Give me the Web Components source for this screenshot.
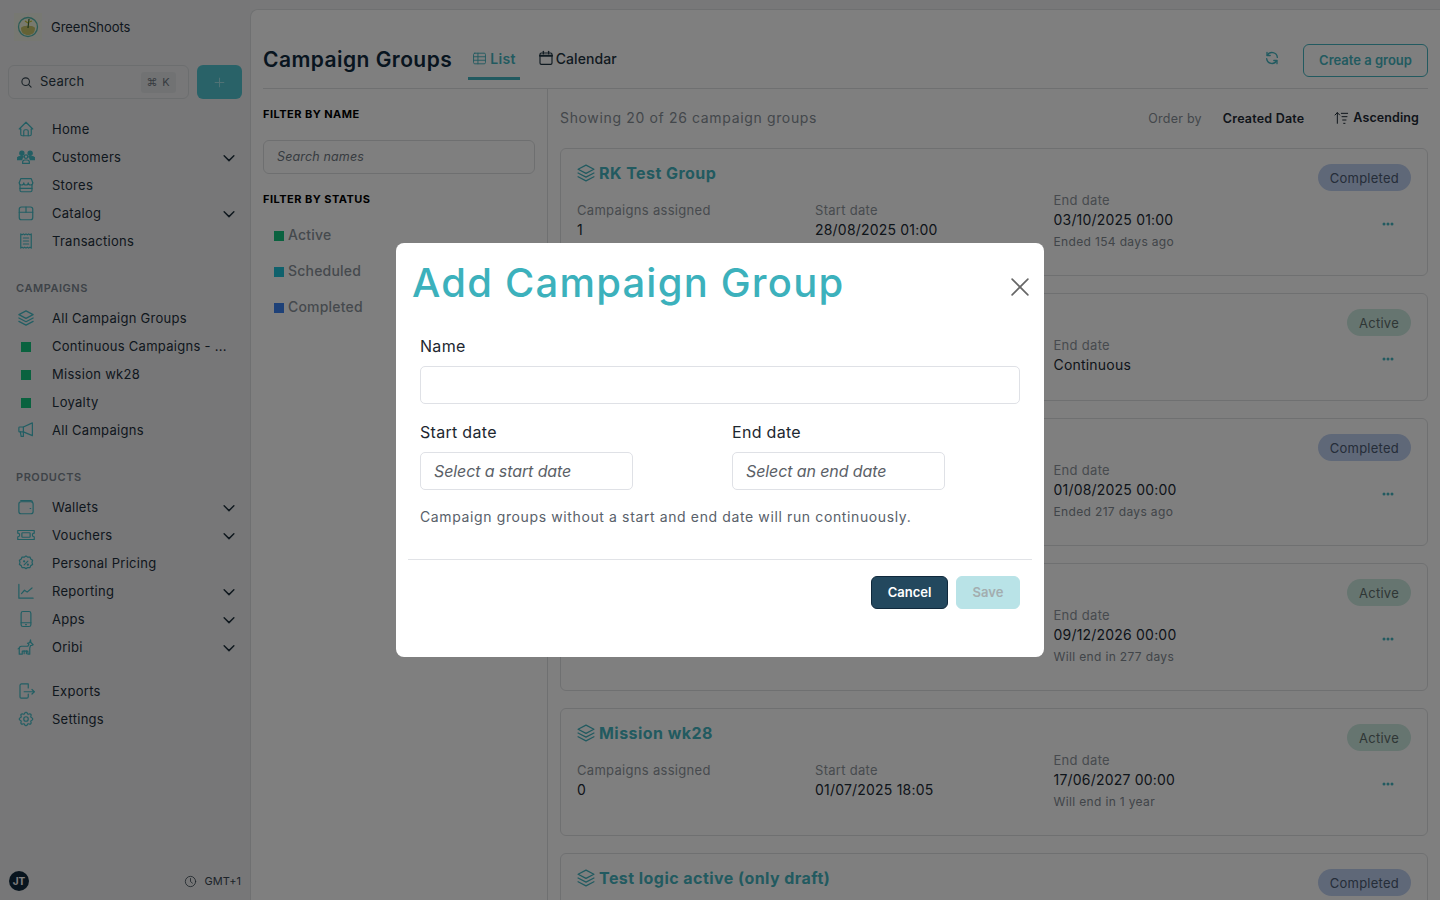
<!DOCTYPE html>
<html lang="en">
<head>
<meta charset="utf-8">
<title>Campaign Groups</title>
<style>
    html, body { margin: 0; height: 100%; overflow: hidden; }
    body { font-family: Inter, "Liberation Sans", sans-serif; color: #1d2b36; background: #f0f1f2; }
</style>
</head>
<body>
<gs-app></gs-app>

<script>
//stroke icons, all on a 24x24 viewbox
const ICONS = {
    home: '<path d="M5 12H3l9-9 9 9h-2"/><path d="M5 12v7a2 2 0 0 0 2 2h10a2 2 0 0 0 2-2v-7"/><path d="M9 21v-6a2 2 0 0 1 2-2h2a2 2 0 0 1 2 2v6"/>',
    users: '<circle cx="6.500" cy="7" r="2.800" fill="currentColor"/><circle cx="17.500" cy="7" r="2.800" fill="currentColor"/><path fill="currentColor" d="M0 15.500c0-3 2.500-4.500 5.500-4.500 1.200 0 2.300.3 3 .8-1.300 1-2 2.200-2.200 3.700z"/><path fill="currentColor" d="M24 15.500c0-3-2.500-4.500-5.500-4.500-1.200 0-2.300.3-3 .8 1.300 1 2 2.200 2.200 3.700z"/><circle cx="12" cy="11.500" r="2.300"/><path d="M7.500 20.500v-1.500c0-1.500 1.500-3 3-3h3c1.500 0 3 1.500 3 3v1.500z"/>',
    store: '<path d="M3 9l2-5.500h14L21 9"/><path d="M3 9a3 3 0 0 0 6 0 3 3 0 0 0 6 0 3 3 0 0 0 6 0"/><path d="M4 12v7a2 2 0 0 0 2 2h12a2 2 0 0 0 2-2v-7"/><path d="M4 16.500h16"/>',
    catalog: '<rect x="3" y="4" width="18" height="17" rx="3"/><path d="M3 11h18"/><path d="M12 4v7"/>',
    receipt: '<path d="M5 2.500l1.750 1.200L8.500 2.500l1.750 1.200L12 2.500l1.750 1.200 1.750-1.200 1.750 1.200L19 2.500v19l-1.750-1.200-1.750 1.200-1.750-1.200L12 21.500l-1.750-1.200-1.750 1.200-1.750-1.200L5 21.500z"/><path d="M8.500 8h7"/><path d="M8.500 12h7"/><path d="M8.500 16h7"/>',
    layers: '<path d="M12 2.500 2.500 7.500l9.500 5 9.500-5z"/><path d="M2.500 12l9.500 5 9.500-5"/><path d="M2.500 16.500l9.500 5 9.500-5"/>',
    megaphone: '<path d="M8.500 15v5.500H5.500L4.500 14.500"/><path d="M8.500 8l12-5.500v17L8.500 14.500H3.500a1 1 0 0 1-1-1V9a1 1 0 0 1 1-1z"/><path d="M8.500 8v6.500"/>',
    wallet: '<path d="M5 3.500h13.500a2 2 0 0 1 2 2"/><rect x="2.500" y="5" width="19" height="16" rx="3"/><path d="M17.500 14h.8"/>',
    ticket: '<path d="M1 6h22v3.500a2.500 2.500 0 0 0 0 5V18H1v-3.500a2.500 2.500 0 0 0 0-5z"/><rect x="6.500" y="9" width="11" height="6" rx="1"/>',
    discount: '<path d="M12 2.500l2.400 1.700 2.900-.2 1 2.700 2.500 1.600-.8 2.800.8 2.800-2.500 1.600-1 2.700-2.900-.2-2.400 1.500-2.400-1.500-2.900.2-1-2.700-2.500-1.600.8-2.800-.8-2.800 2.500-1.600 1-2.700 2.900.2z"/><path d="M9.500 14.500l5-5"/><circle cx="9.500" cy="9.800" r=".7"/><circle cx="14.500" cy="14.200" r=".7"/>',
    chart: '<path d="M2.500 3v18.500h19"/><path d="M6 15.500l4-4.500 3.500 2.500 6.500-5.500"/>',
    mobile: '<rect x="5.500" y="2" width="13" height="20" rx="2.500"/><path d="M5.500 17h13"/><path d="M11.500 19.500h1"/>',
    goat: '<path d="M3 21.500V14c0-2 1-3 3-3h8.500l1.500-3-2-1 3-1 1-3.500.5 3.500 3 3-2 1h-1.500l-1 3.500v8h-2.500v-4H7v4H3"/><path d="M3 13.500l-1.500 1"/><path d="M9.500 17v4"/><path d="M12.500 17v4"/>',
    exportfile: '<path d="M15 8V2.500H6a2 2 0 0 0-2 2v15.500a1.500 1.500 0 0 0 1.500 1.500H13a2 2 0 0 0 2-2v-3.500"/><path d="M9.500 13H23"/><path d="M20 10l3 3-3 3"/>',
    settings: '<path d="M10.325 4.317c.426-1.756 2.924-1.756 3.350 0a1.724 1.724 0 0 0 2.573 1.066c1.543-.94 3.310.826 2.370 2.370a1.724 1.724 0 0 0 1.065 2.572c1.756.426 1.756 2.924 0 3.350a1.724 1.724 0 0 0-1.066 2.573c.94 1.543-.826 3.310-2.370 2.370a1.724 1.724 0 0 0-2.572 1.065c-.426 1.756-2.924 1.756-3.350 0a1.724 1.724 0 0 0-2.573-1.066c-1.543.94-3.310-.826-2.370-2.370a1.724 1.724 0 0 0-1.065-2.572c-1.756-.426-1.756-2.924 0-3.350a1.724 1.724 0 0 0 1.066-2.573c-.94-1.543.826-3.310 2.370-2.370 1 .608 2.296.07 2.572-1.065z"/><circle cx="12" cy="12" r="3"/>',
    chevron: '<path d="M5.500 9l6.500 6.500L18.500 9"/>',
    search: '<circle cx="10.500" cy="10.500" r="7"/><path d="M20.500 20.500l-5-5"/>',
    plus: '<path d="M12 4v16"/><path d="M4 12h16"/>',
    refresh: '<path d="M20 11A8 8 0 0 0 5 8"/><path d="M4.500 3.500v4.800h4.800"/><path d="M4 13a8 8 0 0 0 15 3"/><path d="M19.500 20.500v-4.800h-4.800"/>',
    table: '<rect x="2.500" y="3.500" width="19" height="17" rx="2"/><path d="M2.500 9.200h19"/><path d="M2.500 14.800h19"/><path d="M9.500 3.500v17"/>',
    calendar: '<rect x="3" y="4.500" width="18" height="17" rx="2"/><path d="M3 8.500h18" stroke-width="3"/><path d="M8 2v4"/><path d="M16 2v4"/>',
    sort: '<path d="M6.500 20V4"/><path d="M3 7.500 6.500 4 10 7.500"/><path d="M12.500 5H22"/><path d="M13.500 10H21"/><path d="M14.500 15h5"/><path d="M16 20h2"/>',
    clock: '<circle cx="12" cy="12" r="9.500"/><path d="M12 6.500V12l3.500 3"/>',
    close: '<path d="M1.500 1.500l21 21"/><path d="M22.500 1.500l-21 21"/>',
};

function makeTemplate(html) {
    const t = document.createElement("template");
    t.innerHTML = html;
    return t;
}

//base class, stamps the template into an open shadow root
class ShadowElement extends HTMLElement {
    connectedCallback() {
        if (this.shadowRoot) return;
        this.attachShadow({ mode: "open" }).append(this.constructor.template.content.cloneNode(true));
        if (this.ready) this.ready();
    }
}

class GsIcon extends HTMLElement {
    connectedCallback() {
        if (this.shadowRoot) return;
        const size = this.getAttribute("size") || 18;
        const sw = this.getAttribute("stroke") || 1.5;
        this.attachShadow({ mode: "open" }).innerHTML = `
            <style>:host{display:inline-flex;flex:none;width:${size}px;height:${size}px;}svg{display:block;}</style>
            <svg width="${size}" height="${size}" viewBox="0 0 24 24" fill="none" stroke="currentColor"
                 stroke-width="${sw}" stroke-linecap="round" stroke-linejoin="round">${ICONS[this.getAttribute("name")] || ""}</svg>`;
    }
}

//single row of the side navigation
class GsNavItem extends ShadowElement {
    static template = makeTemplate(`
        <style>
            :host { display: flex; align-items: center; height: 28px; padding-left: 17px; padding-right: 12px; font-size: 13px; letter-spacing: .28px; color: #1e2f3c; }
            .lead { width: 18px; height: 18px; display: flex; align-items: center; justify-content: center; color: #45bcc7; margin-right: 17px; flex: none; }
            .swatch { width: 10px; height: 10px; margin-top: 2px; background: #14c47f; }
            .text { flex: 1; white-space: nowrap; overflow: hidden; }
            .end { display: flex; padding-top: 2px; color: #1e2f3c; }
        </style>
        <span class="lead"></span><span class="text"><slot></slot></span><span class="end"></span>
    `);
    ready() {
        const lead = this.shadowRoot.querySelector(".lead");
        if (this.hasAttribute("swatch")) lead.innerHTML = '<span class="swatch"></span>';
        else lead.innerHTML = `<gs-icon name="${this.getAttribute("icon")}" size="18" stroke="1.600"></gs-icon>`;
        if (this.hasAttribute("more")) {
            this.shadowRoot.querySelector(".end").innerHTML = '<gs-icon name="chevron" size="18" stroke="1.900"></gs-icon>';
        }
    }
}

class GsNavHeading extends ShadowElement {
    static template = makeTemplate(`
        <style>
            :host { display: block; padding-left: 16px; font-size: 11px; font-weight: 600; letter-spacing: .55px; color: #7d8690; line-height: 14px; }
        </style>
        <slot></slot>
    `);
}

class GsSidebar extends ShadowElement {
    static template = makeTemplate(`
        <style>
            :host { display: flex; flex-direction: column; width: 250px; flex: none; height: 100vh; box-sizing: border-box; background: #eeeff0; }
            .brand { display: flex; align-items: center; height: 28px; margin-top: 13px; padding-left: 14px; font-size: 13px; letter-spacing: -.04px; color: #1e2f3c; gap: 9px; }
            .brand svg { display: block; }
            .find { display: flex; gap: 8px; margin: 24px 8px 0 8px; height: 34px; }
            .search { flex: 1; box-sizing: border-box; border: 1px solid #d9dcdf; border-radius: 6px; display: flex; align-items: center; padding: 0 12px 0 11px; font-size: 13px; line-height: 15px; letter-spacing: .2px; color: #2b3a46; }
            .search gs-icon { margin-right: 7px; color: #33424e; }
            .search span { flex: 1; padding-bottom: 1px; }
            .search kbd { font: inherit; font-size: 11px; letter-spacing: .9px; background: #e3e5e7; color: #6f7882; border-radius: 3px; width: 35px; height: 21px; line-height: 21px; text-align: center; }
            .add { width: 45px; border-radius: 6px; background: #52c5d1; color: #a4e4ea; display: flex; align-items: center; justify-content: center; }
            nav { display: block; }
            .n1 { margin-top: 16px; }
            gs-nav-heading { margin-top: 26px; margin-bottom: 9px; }
            .n3 { margin-top: 16px; }
            .foot { margin-top: auto; display: flex; align-items: center; justify-content: space-between; height: 20px; padding: 0 9px; margin-bottom: 9px; font-size: 11px; letter-spacing: .05px; color: #3a4752; }
            .avatar { width: 20px; height: 20px; border-radius: 50%; background: #10293c; color: #fff; font-size: 10px; font-weight: 700; display: flex; align-items: center; justify-content: center; }
            .tz { display: flex; align-items: center; gap: 8px; }
        </style>
        <div class="brand">
            <svg width="28" height="28" viewBox="0 0 28 28">
                <rect width="28" height="28" fill="#eff1e4"/>
                <circle cx="14" cy="14" r="9.500" fill="#f2f4dc" stroke="#58b8ae" stroke-width="1.300"/>
                <path d="M7 15c1-3 13-3 14 0 0 5-3 7-7 7s-7-2-7-7z" fill="#c9c56a"/>
                <path d="M14 15l1-9" stroke="#3f6a34" stroke-width="1.200"/>
                <path d="M14 10l-3-2M15 9l3-1" stroke="#c8c533" stroke-width="1.200"/>
            </svg>
            <span>GreenShoots</span>
        </div>
        <div class="find">
            <div class="search"><gs-icon name="search" size="13" stroke="2"></gs-icon><span>Search</span><kbd>⌘ K</kbd></div>
            <div class="add"><gs-icon name="plus" size="13" stroke="1.800"></gs-icon></div>
        </div>
        <nav class="n1">
            <gs-nav-item icon="home">Home</gs-nav-item>
            <gs-nav-item icon="users" more>Customers</gs-nav-item>
            <gs-nav-item icon="store">Stores</gs-nav-item>
            <gs-nav-item icon="catalog" more>Catalog</gs-nav-item>
            <gs-nav-item icon="receipt">Transactions</gs-nav-item>
        </nav>
        <gs-nav-heading>CAMPAIGNS</gs-nav-heading>
        <nav>
            <gs-nav-item icon="layers">All Campaign Groups</gs-nav-item>
            <gs-nav-item swatch>Continuous Campaigns - ...</gs-nav-item>
            <gs-nav-item swatch>Mission wk28</gs-nav-item>
            <gs-nav-item swatch>Loyalty</gs-nav-item>
            <gs-nav-item icon="megaphone">All Campaigns</gs-nav-item>
        </nav>
        <gs-nav-heading>PRODUCTS</gs-nav-heading>
        <nav>
            <gs-nav-item icon="wallet" more>Wallets</gs-nav-item>
            <gs-nav-item icon="ticket" more>Vouchers</gs-nav-item>
            <gs-nav-item icon="discount">Personal Pricing</gs-nav-item>
            <gs-nav-item icon="chart" more>Reporting</gs-nav-item>
            <gs-nav-item icon="mobile" more>Apps</gs-nav-item>
            <gs-nav-item icon="goat" more>Oribi</gs-nav-item>
        </nav>
        <nav class="n3">
            <gs-nav-item icon="exportfile">Exports</gs-nav-item>
            <gs-nav-item icon="settings">Settings</gs-nav-item>
        </nav>
        <div class="foot">
            <span class="avatar">JT</span>
            <span class="tz"><gs-icon name="clock" size="13"></gs-icon>GMT+1</span>
        </div>
    `);
}

class GsPageHeader extends ShadowElement {
    static template = makeTemplate(`
        <style>
            :host { display: flex; align-items: flex-start; height: 79px; box-sizing: border-box; margin: 0 12px 0 12px; border-bottom: 1px solid #dfe1e3; }
            h1 { margin: 34px 0 0; font-size: 21px; line-height: 32px; font-weight: 600; letter-spacing: .45px; color: #102a3e; }
            .tab { display: flex; align-items: center; gap: 2px; height: 34px; padding-bottom: 2px; margin-top: 31px; font-size: 14px; font-weight: 500; letter-spacing: .1px; color: #1f3442; }
            .list { margin-left: 16px; padding: 0 4px 2px; gap: 3px; color: #45b5c0; font-weight: 600; letter-spacing: .3px; border-bottom: 3px solid #45b5c0; }
            .cal { margin-left: 18px; }
            .spacer { flex: 1; }
            .sync { margin-top: 40px; margin-right: 23px; color: #45b5c0; }
            button { margin-top: 34px; width: 125px; height: 33px; padding: 0 0 2px; background: none; border: 1px solid #45b5c0; border-radius: 6px; color: #45b5c0; font: 600 13px Inter, sans-serif; }
        </style>
        <h1>Campaign Groups</h1>
        <div class="tab list"><gs-icon name="table" size="15"></gs-icon>List</div>
        <div class="tab cal"><gs-icon name="calendar" size="16" stroke="1.700"></gs-icon>Calendar</div>
        <div class="spacer"></div>
        <gs-icon class="sync" name="refresh" size="16" stroke="2"></gs-icon>
        <button>Create a group</button>
    `);
}

class GsStatusFilter extends ShadowElement {
    static template = makeTemplate(`
        <style>
            :host { display: flex; align-items: center; box-sizing: border-box; height: 36px; padding: 0 0 1px 11px; font-size: 14px; font-weight: 500; letter-spacing: .2px; color: #8b939b; }
            i { width: 10px; height: 10px; margin: 3px 4px 0 0; background: var(--swatch); }
        </style>
        <i></i><slot></slot>
    `);
}

class GsFilters extends ShadowElement {
    static template = makeTemplate(`
        <style>
            :host { display: block; width: 285px; flex: none; box-sizing: border-box; padding: 0 12px 0 0; border-right: 1px solid #dfe1e3; margin-left: 12px; }
            h2 { margin: 0; font-size: 11px; line-height: 14px; font-weight: 700; letter-spacing: .47px; color: #000; }
            .a { padding-top: 18px; }
            .box { margin-top: 19px; height: 34px; box-sizing: border-box; border: 1px solid #dcdee0; border-radius: 6px; display: flex; align-items: center; padding: 0 0 1px 13px; font-size: 12.500px; font-style: italic; letter-spacing: .15px; color: #6f7882; }
            .b { margin-top: 18px; margin-bottom: 11px; }
        </style>
        <h2 class="a">FILTER BY NAME</h2>
        <div class="box">Search names</div>
        <h2 class="b">FILTER BY STATUS</h2>
        <gs-status-filter style="--swatch:#14c47f">Active</gs-status-filter>
        <gs-status-filter style="--swatch:#1ec2d8">Scheduled</gs-status-filter>
        <gs-status-filter style="--swatch:#3c82f0">Completed</gs-status-filter>
    `);
}

class StatusPill extends ShadowElement {
    static template = makeTemplate(`
        <style>
            :host { display: inline-flex; align-items: center; height: 27px; padding: 0 12px; border-radius: 14px; font-size: 13px; letter-spacing: .25px; color: #5f6e6c; background: #cdeae1; }
            :host([kind="completed"]) { background: #bfd0f0; color: #4a5a72; }
        </style>
        <slot></slot>
    `);
}

//one campaign group card; only what the attributes give is shown
class CampaignCard extends ShadowElement {
    static template = makeTemplate(`
        <style>
            :host { display: flex; box-sizing: border-box; border: 1px solid #dfe1e3; border-radius: 6px; padding: 15px 16px 25px; }
            .left { flex: 1; min-width: 0; }
            .title { display: flex; align-items: center; gap: 3px; height: 18px; font-size: 16px; font-weight: 700; letter-spacing: .45px; color: #45b5c0; white-space: nowrap; }
            .title gs-icon { margin-left: -1px; }
            .cols { display: grid; grid-template-columns: 238px 238.500px 1fr; margin-top: 9px; font-size: 13px; letter-spacing: .3px; }
            .col.low { padding-top: 10px; }
            .lbl { line-height: 18px; color: #8e959c; }
            .val { line-height: 20px; margin-top: 1px; font-size: 14px; letter-spacing: .2px; color: #1c2a35; }
            .sub { line-height: 18px; margin-top: 3px; margin-bottom: -1px; font-size: 12px; letter-spacing: .35px; color: #828a92; }
            .right { display: flex; flex-direction: column; align-items: flex-end; }
            .dots { flex: 1; display: flex; align-items: center; margin: 7px 17px 0 0; }
            .dots svg { display: block; }
        </style>
        <div class="left">
            <div class="title"><gs-icon name="layers" size="20" stroke="1.600"></gs-icon><span class="name"></span></div>
            <div class="cols">
                <div class="col low"><div class="lbl">Campaigns assigned</div><div class="val assigned"></div></div>
                <div class="col low"><div class="lbl">Start date</div><div class="val start"></div></div>
                <div class="col"><div class="lbl">End date</div><div class="val end"></div><div class="sub note"></div></div>
            </div>
        </div>
        <div class="right">
            <status-pill class="pill"></status-pill>
            <div class="dots"><svg width="12" height="4" viewBox="0 0 12 4" fill="#45b5c0"><circle cx="2" cy="2" r="1.500"/><circle cx="6" cy="2" r="1.500"/><circle cx="10" cy="2" r="1.500"/></svg></div>
        </div>
    `);
    ready() {
        const s = this.shadowRoot;
        const a = n => this.getAttribute(n) || "";
        const cols = s.querySelectorAll(".col");
        s.querySelector(".name").textContent = a("name");
        if (a("start")) {
            s.querySelector(".assigned").textContent = a("assigned");
            s.querySelector(".start").textContent = a("start");
        } else {
            cols[0].textContent = "";
            cols[1].textContent = "";
        }
        if (a("end")) s.querySelector(".end").textContent = a("end");
        else cols[2].textContent = "";
        const note = s.querySelector(".note");
        if (note) { if (a("note")) note.textContent = a("note"); else note.remove(); }
        const pill = s.querySelector(".pill");
        pill.textContent = a("status");
        pill.setAttribute("kind", a("status").toLowerCase());
    }
}

class GsCampaignList extends ShadowElement {
    static template = makeTemplate(`
        <style>
            :host { display: block; flex: 1; min-width: 0; padding: 0 12px 0 12px; }
            .bar { display: flex; align-items: center; height: 58px; font-size: 13px; letter-spacing: .25px; }
            .count { flex: 1; padding-bottom: 2px; font-size: 14px; letter-spacing: .65px; color: #878f97; }
            .by { color: #878f97; margin-right: 21px; font-size: 12.500px; }
            .key { font-weight: 600; font-size: 12.500px; letter-spacing: .2px; color: #1e2a34; }
            .asc { display: flex; align-items: center; gap: 4px; margin-left: 29px; margin-right: 9px; padding-bottom: 1px; font-weight: 600; font-size: 12.500px; letter-spacing: .1px; color: #1e2a34; }
            .cards { display: flex; flex-direction: column; gap: 17px; margin-top: 1px; }
        </style>
        <div class="bar">
            <span class="count">Showing 20 of 26 campaign groups</span>
            <span class="by">Order by</span>
            <span class="key">Created Date</span>
            <span class="asc"><gs-icon name="sort" size="16" stroke="1.500"></gs-icon>Ascending</span>
        </div>
        <div class="cards">
            <campaign-card name="RK Test Group" assigned="1" start="28/08/2025 01:00" end="03/10/2025 01:00" note="Ended 154 days ago" status="Completed"></campaign-card>
            <campaign-card end="Continuous" status="Active"></campaign-card>
            <campaign-card end="01/08/2025 00:00" note="Ended 217 days ago" status="Completed"></campaign-card>
            <campaign-card end="09/12/2026 00:00" note="Will end in 277 days" status="Active"></campaign-card>
            <campaign-card name="Mission wk28" assigned="0" start="01/07/2025 18:05" end="17/06/2027 00:00" note="Will end in 1 year" status="Active"></campaign-card>
            <campaign-card name="Test logic active (only draft)" status="Completed"></campaign-card>
        </div>
    `);
}

class GsMain extends ShadowElement {
    static template = makeTemplate(`
        <style>
            :host { display: flex; flex-direction: column; flex: 1; min-width: 0; height: calc(100vh - 9px); margin-top: 9px; box-sizing: border-box; background: #fff; border-left: 1px solid #dfe1e3; border-top: 1px solid #dfe1e3; border-top-left-radius: 8px; overflow: hidden; }
            .body { display: flex; flex: 1; min-height: 0; }
        </style>
        <gs-page-header></gs-page-header>
        <div class="body"><gs-filters></gs-filters><gs-campaign-list></gs-campaign-list></div>
    `);
}

//modal over the whole page, overlay darkens everything behind it
class AddGroupModal extends ShadowElement {
    static template = makeTemplate(`
        <style>
            :host { position: fixed; inset: 0; display: flex; align-items: center; justify-content: center; background: rgba(0, 0, 0, .5); }
            .dialog { width: 648px; height: 414px; box-sizing: border-box; background: #fff; border-radius: 8px; padding: 0 12px; }
            .head { display: flex; align-items: flex-start; justify-content: space-between; height: 79px; padding-left: 4px; }
            h2 { margin: 16px 0 0; font-size: 40px; line-height: 48px; font-weight: 500; letter-spacing: 1.200px; color: #3cb1bc; white-space: nowrap; }
            .close { margin: 35px 3px 0 0; color: #666; }
            .form { padding: 14px 12px 0; }
            label { display: block; font-size: 16px; line-height: 20px; letter-spacing: .3px; color: #1d2730; }
            .input { box-sizing: border-box; height: 38px; margin-top: 10px; border: 1px solid #dfe1e6; border-radius: 5px; padding-left: 13px; display: flex; align-items: center; font-size: 16px; font-style: italic; letter-spacing: -.1px; color: #5b6167; }
            .dates { display: grid; grid-template-columns: 213px 213px; column-gap: 99px; margin-top: 18px; }
            .hint { margin-top: 17px; font-size: 14px; line-height: 20px; letter-spacing: .62px; color: #59616a; }
            .actions { display: flex; justify-content: flex-end; gap: 8px; margin-top: 32px; padding: 16px 12px 0; border-top: 1px solid #e1e3e7; }
            button { height: 33px; border-radius: 6px; font: 600 13px Inter, sans-serif; padding: 0 0 2px; }
            .cancel { width: 77px; background: #23485e; border: 1px solid #10293c; color: #fff; }
            .save { width: 64px; background: #b9e3e7; border: 1px solid #b9e3e7; color: #a3adaf; }
        </style>
        <div class="dialog" role="dialog">
            <div class="head"><h2>Add Campaign Group</h2><gs-icon class="close" name="close" size="18" stroke="2.200"></gs-icon></div>
            <div class="form">
                <label>Name</label>
                <div class="input"></div>
                <div class="dates">
                    <div><label>Start date</label><div class="input">Select a start date</div></div>
                    <div><label>End date</label><div class="input">Select an end date</div></div>
                </div>
                <div class="hint">Campaign groups without a start and end date will run continuously.</div>
            </div>
            <div class="actions"><button class="cancel">Cancel</button><button class="save">Save</button></div>
        </div>
    `);
}

class GsApp extends ShadowElement {
    static template = makeTemplate(`
        <style>
            :host { display: flex; height: 100vh; width: 100%; overflow: hidden; }
        </style>
        <gs-sidebar></gs-sidebar>
        <gs-main></gs-main>
        <add-group-modal></add-group-modal>
    `);
}

customElements.define("gs-icon", GsIcon);
customElements.define("gs-nav-item", GsNavItem);
customElements.define("gs-nav-heading", GsNavHeading);
customElements.define("gs-sidebar", GsSidebar);
customElements.define("gs-page-header", GsPageHeader);
customElements.define("gs-status-filter", GsStatusFilter);
customElements.define("gs-filters", GsFilters);
customElements.define("status-pill", StatusPill);
customElements.define("campaign-card", CampaignCard);
customElements.define("gs-campaign-list", GsCampaignList);
customElements.define("gs-main", GsMain);
customElements.define("add-group-modal", AddGroupModal);
customElements.define("gs-app", GsApp);
</script>
</body>
</html>
